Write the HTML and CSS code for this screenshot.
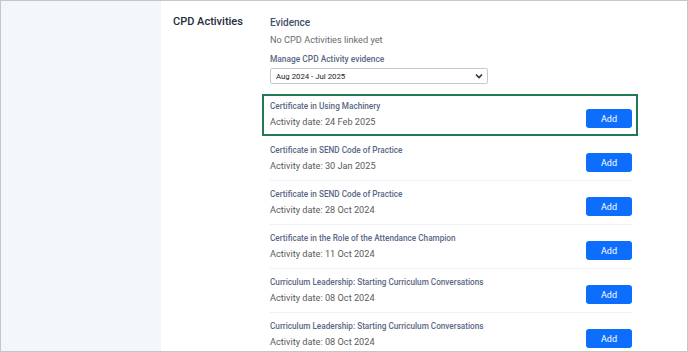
FILE: index.html
```html
<!DOCTYPE html>
<html lang="en">
<head>
  <meta charset="UTF-8">
  <meta name="viewport" content="width=device-width, initial-scale=1.0">
  <title>CPD Activities</title>
  <link rel="stylesheet" href="styles.css">
</head>
<body>
  <div class="frame">
    <div class="sidebar"></div>
    <div class="main">
      <h2 class="section-title">CPD Activities</h2>
      <div class="content">
        <h3 class="label">Evidence</h3>
        <p class="empty">No CPD Activities linked yet</p>
        <label class="field-label" for="year">Manage CPD Activity evidence</label>
        <div class="select">
          <span>Aug 2024 - Jul 2025</span>
          <svg width="8" height="6" viewBox="0 0 8 6"><path d="M1 1.5 L4 4.5 L7 1.5" fill="none" stroke="#333" stroke-width="1.6"/></svg>
        </div>
        <div class="list">
          <div class="item selected">
            <div>
              <div class="item-title">Certificate in Using Machinery</div>
              <div class="item-date">Activity date: 24 Feb 2025</div>
            </div>
            <button class="btn">Add</button>
          </div>
          <div class="item">
            <div>
              <div class="item-title">Certificate in SEND Code of Practice</div>
              <div class="item-date">Activity date: 30 Jan 2025</div>
            </div>
            <button class="btn">Add</button>
          </div>
          <div class="item">
            <div>
              <div class="item-title">Certificate in SEND Code of Practice</div>
              <div class="item-date">Activity date: 28 Oct 2024</div>
            </div>
            <button class="btn">Add</button>
          </div>
          <div class="item">
            <div>
              <div class="item-title">Certificate in the Role of the Attendance Champion</div>
              <div class="item-date">Activity date: 11 Oct 2024</div>
            </div>
            <button class="btn">Add</button>
          </div>
          <div class="item">
            <div>
              <div class="item-title">Curriculum Leadership: Starting Curriculum Conversations</div>
              <div class="item-date">Activity date: 08 Oct 2024</div>
            </div>
            <button class="btn">Add</button>
          </div>
          <div class="item">
            <div>
              <div class="item-title">Curriculum Leadership: Starting Curriculum Conversations</div>
              <div class="item-date">Activity date: 08 Oct 2024</div>
            </div>
            <button class="btn">Add</button>
          </div>
        </div>
      </div>
    </div>
  </div>
</body>
</html>
```

FILE: styles.css
```css
* {
  margin: 0;
  padding: 0;
  box-sizing: border-box;
  font-family: 'Roboto', 'Inter', sans-serif;
}
body {
  background: white;
}
.frame {
  width: 688px;
  height: 352px;
  border: 1px solid #c6c6c6;
  display: flex;
  overflow: hidden;
}
.sidebar {
  width: 160px;
  background: #f2f7fc;
}
.main {
  flex: 1;
  display: flex;
  padding: 13px 0 0 12px;
}
.section-title {
  width: 97px;
  font-size: 11px;
  font-weight: 500;
  line-height: 16px;
  color: #222b3a;
}
.content {
  width: 362px;
}
.label {
  margin-top: 1px;
  font-size: 10px;
  font-weight: 500;
  line-height: 15px;
  color: #44506a;
}
.empty {
  margin-top: 3px;
  font-size: 9.2px;
  line-height: 14px;
  color: #6b6b6b;
}
.field-label {
  display: block;
  margin-top: 6px;
  font-size: 8.4px;
  font-weight: 500;
  line-height: 12px;
  color: #5a6785;
}
.select {
  margin-top: 3px;
  width: 218px;
  height: 16px;
  border: 1px solid #c8c8c8;
  border-radius: 2px;
  display: flex;
  align-items: center;
  justify-content: space-between;
  padding: 0 4px 0 5px;
  font-size: 7.8px;
  color: #222;
}
.list {
  margin-top: 10px;
}
.item {
  display: flex;
  align-items: center;
  justify-content: space-between;
  padding: 6px 0;
  border-top: 1px solid #eef1f5;
}
.item.selected {
  border: 2px solid #1f7a52;
  margin: 0 -6px 0 -8px;
  padding: 3px 4px 4px 6px;
}
.selected + .item {
  border-top-color: transparent;
}
.item-title {
  font-size: 8.2px;
  font-weight: 500;
  line-height: 14px;
  color: #5a6785;
}
.item-date {
  margin-top: 1px;
  font-size: 9.2px;
  line-height: 16px;
  color: #5a5a5a;
}
.btn {
  width: 46px;
  height: 19px;
  margin-top: 8px;
  border: none;
  border-radius: 3px;
  background: #0d6efd;
  color: white;
  font-size: 9px;
}
```
